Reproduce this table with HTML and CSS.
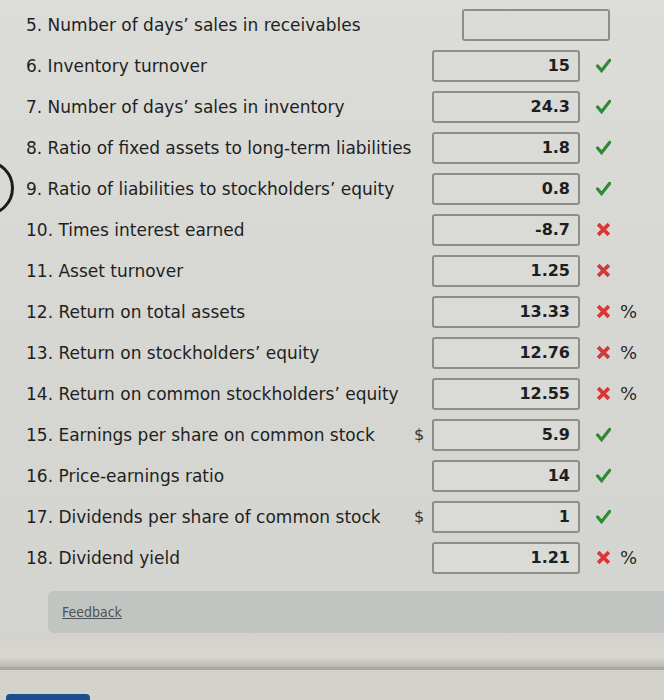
FILE: index.html
```html
<!DOCTYPE html>
<html>
<head>
<meta charset="utf-8">
<link rel="stylesheet" href="styles.css">
</head>
<body>
<div class="page">
  <div class="pen-mark"></div>
  <div class="rows">
    <div class="row"><span class="label">5. Number of days’ sales in receivables</span><span class="cur"></span><span class="box shifted"></span><span class="mark"></span><span class="unit"></span></div>
    <div class="row"><span class="label">6. Inventory turnover</span><span class="cur"></span><span class="box">15</span><span class="mark ok"><svg viewBox="0 0 14 14"><path d="M1.5 7.5 L5.2 11.8 L12.8 2.2" /></svg></span><span class="unit"></span></div>
    <div class="row"><span class="label">7. Number of days’ sales in inventory</span><span class="cur"></span><span class="box">24.3</span><span class="mark ok"><svg viewBox="0 0 14 14"><path d="M1.5 7.5 L5.2 11.8 L12.8 2.2" /></svg></span><span class="unit"></span></div>
    <div class="row"><span class="label">8. Ratio of fixed assets to long-term liabilities</span><span class="cur"></span><span class="box">1.8</span><span class="mark ok"><svg viewBox="0 0 14 14"><path d="M1.5 7.5 L5.2 11.8 L12.8 2.2" /></svg></span><span class="unit"></span></div>
    <div class="row"><span class="label">9. Ratio of liabilities to stockholders’ equity</span><span class="cur"></span><span class="box">0.8</span><span class="mark ok"><svg viewBox="0 0 14 14"><path d="M1.5 7.5 L5.2 11.8 L12.8 2.2" /></svg></span><span class="unit"></span></div>
    <div class="row"><span class="label">10. Times interest earned</span><span class="cur"></span><span class="box">-8.7</span><span class="mark bad"><svg viewBox="0 0 14 14"><path d="M2 2 L12 12 M12 2 L2 12" /></svg></span><span class="unit"></span></div>
    <div class="row"><span class="label">11. Asset turnover</span><span class="cur"></span><span class="box">1.25</span><span class="mark bad"><svg viewBox="0 0 14 14"><path d="M2 2 L12 12 M12 2 L2 12" /></svg></span><span class="unit"></span></div>
    <div class="row"><span class="label">12. Return on total assets</span><span class="cur"></span><span class="box">13.33</span><span class="mark bad"><svg viewBox="0 0 14 14"><path d="M2 2 L12 12 M12 2 L2 12" /></svg></span><span class="unit">%</span></div>
    <div class="row"><span class="label">13. Return on stockholders’ equity</span><span class="cur"></span><span class="box">12.76</span><span class="mark bad"><svg viewBox="0 0 14 14"><path d="M2 2 L12 12 M12 2 L2 12" /></svg></span><span class="unit">%</span></div>
    <div class="row"><span class="label">14. Return on common stockholders’ equity</span><span class="cur"></span><span class="box">12.55</span><span class="mark bad"><svg viewBox="0 0 14 14"><path d="M2 2 L12 12 M12 2 L2 12" /></svg></span><span class="unit">%</span></div>
    <div class="row"><span class="label">15. Earnings per share on common stock</span><span class="cur">$</span><span class="box">5.9</span><span class="mark ok"><svg viewBox="0 0 14 14"><path d="M1.5 7.5 L5.2 11.8 L12.8 2.2" /></svg></span><span class="unit"></span></div>
    <div class="row"><span class="label">16. Price-earnings ratio</span><span class="cur"></span><span class="box">14</span><span class="mark ok"><svg viewBox="0 0 14 14"><path d="M1.5 7.5 L5.2 11.8 L12.8 2.2" /></svg></span><span class="unit"></span></div>
    <div class="row"><span class="label">17. Dividends per share of common stock</span><span class="cur">$</span><span class="box">1</span><span class="mark ok"><svg viewBox="0 0 14 14"><path d="M1.5 7.5 L5.2 11.8 L12.8 2.2" /></svg></span><span class="unit"></span></div>
    <div class="row"><span class="label">18. Dividend yield</span><span class="cur"></span><span class="box">1.21</span><span class="mark bad"><svg viewBox="0 0 14 14"><path d="M2 2 L12 12 M12 2 L2 12" /></svg></span><span class="unit">%</span></div>
  </div>
  <div class="feedback"><a class="feedback-link">Feedback</a></div>
  <div class="strip"></div>
  <div class="bottom"><span class="btn"></span></div>
</div>
</body>
</html>
```
FILE: styles.css
```css
html, body {
  margin: 0;
  padding: 0;
}
body {
  width: 664px;
  height: 700px;
  overflow: hidden;
  background: linear-gradient(180deg, #dcdcd9 0%, #d6d7d3 50%, #d3d4cf 100%);
  font-family: "DejaVu Sans", Verdana, sans-serif;
  color: #222;
}
.page {
  position: relative;
  height: 700px;
}
.pen-mark {
  position: absolute;
  left: -42px;
  top: 160px;
  width: 50px;
  height: 50px;
  border: 3px solid #1c1c1c;
  border-radius: 50%;
}
.rows {
  padding: 4px 0 0 26px;
}
.row {
  display: grid;
  grid-template-columns: minmax(0, 1fr) 22px 148px 34px 28px;
  align-items: center;
  height: 41px;
  padding-right: 22px;
}
.label {
  font-size: 17px;
  color: #1f1f1f;
  white-space: nowrap;
  min-width: 0;
}
.cur {
  font-size: 16px;
  color: #333;
  text-align: left;
  padding-left: 4px;
}
.box {
  box-sizing: border-box;
  height: 32px;
  border: 2px solid #8d8d8b;
  border-radius: 3px;
  background: #dadad7;
  text-align: right;
  padding-right: 8px;
  font-family: "DejaVu Sans", Verdana, sans-serif;
  font-weight: bold;
  font-size: 16px;
  line-height: 28px;
  color: #1e1e1e;
}
.box.shifted {
  margin-left: 30px;
  margin-right: -30px;
}
.mark {
  display: flex;
  justify-content: center;
  padding-left: 12px;
}
.mark svg {
  width: 15px;
  height: 15px;
  fill: none;
  stroke-linecap: round;
}
.mark.ok svg {
  stroke: #2f8a34;
  stroke-width: 3;
}
.mark.bad svg {
  stroke: #d6383a;
  stroke-width: 3.4;
  stroke-linecap: butt;
}
.unit {
  font-size: 18px;
  color: #2a2a2a;
  padding-left: 6px;
}
.feedback {
  margin: 13px 0 0 48px;
  height: 42px;
  background: #c1c5c2;
  border-radius: 5px 0 0 5px;
  display: flex;
  align-items: center;
  padding-left: 14px;
}
.feedback-link {
  font-family: "DejaVu Sans Condensed", "DejaVu Sans", sans-serif;
  font-size: 14px;
  color: #4e5252;
  text-decoration: underline;
}
.strip {
  height: 34px;
  background: linear-gradient(180deg, #d2d1cc 0%, #d8d7d2 70%, #b9b8b3 100%);
  border-bottom: 3px solid #a9a8a3;
}
.bottom {
  height: 30px;
  background: #d3d2cd;
  position: relative;
}
.btn {
  position: absolute;
  left: 6px;
  bottom: 0;
  width: 84px;
  height: 6px;
  background: #1d4f8c;
  border-radius: 4px 4px 0 0;
}
```
